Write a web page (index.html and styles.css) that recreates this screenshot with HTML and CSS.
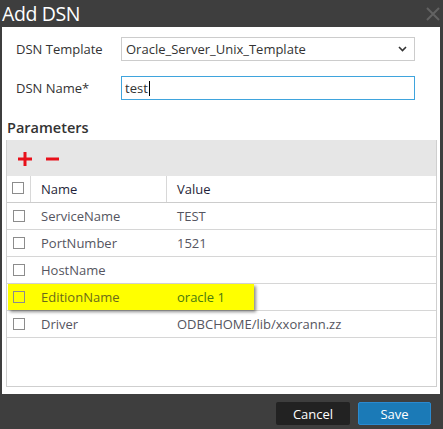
FILE: index.html
```html
<!DOCTYPE html>
<html>
<head>
<meta charset="utf-8">
<link rel="stylesheet" href="styles.css">
</head>
<body>
<div class="dialog">
  <div class="titlebar">
    <span class="title">Add DSN</span>
    <svg class="close" width="14" height="14" viewBox="0 0 14 14"><path d="M1 1L13 13M13 1L1 13" stroke="#626262" stroke-width="2"/></svg>
  </div>
  <div class="content">
    <div class="form-row">
      <label class="label">DSN Template</label>
      <div class="select">
        <span>Oracle_Server_Unix_Template</span>
        <svg class="chev" width="9" height="6" viewBox="0 0 9 6"><path d="M1 1L4.5 4.5L8 1" fill="none" stroke="#333" stroke-width="1.6"/></svg>
      </div>
    </div>
    <div class="form-row">
      <label class="label">DSN Name*</label>
      <div class="input"><span>test</span><span class="caret"></span></div>
    </div>
    <div class="section-title">Parameters</div>
    <div class="table">
      <div class="toolbar">
        <svg class="icon" width="14" height="14" viewBox="0 0 14 14"><path d="M0 7H14M7 0V14" stroke="#e8101a" stroke-width="3"/></svg>
        <svg class="icon" width="13" height="14" viewBox="0 0 13 14"><path d="M0 7H13" stroke="#e8101a" stroke-width="3"/></svg>
      </div>
      <div class="row head">
        <div class="c-check"><span class="box"></span></div>
        <div class="c-name">Name</div>
        <div class="c-value">Value</div>
      </div>
      <div class="row">
        <div class="c-check"><span class="box"></span></div>
        <div class="c-name">ServiceName</div>
        <div class="c-value">TEST</div>
      </div>
      <div class="row">
        <div class="c-check"><span class="box"></span></div>
        <div class="c-name">PortNumber</div>
        <div class="c-value">1521</div>
      </div>
      <div class="row">
        <div class="c-check"><span class="box"></span></div>
        <div class="c-name">HostName</div>
        <div class="c-value"></div>
      </div>
      <div class="row marked">
        <div class="highlight"></div>
        <div class="c-check"><span class="box"></span></div>
        <div class="c-name">EditionName</div>
        <div class="c-value">oracle 1</div>
      </div>
      <div class="row">
        <div class="c-check"><span class="box"></span></div>
        <div class="c-name">Driver</div>
        <div class="c-value">ODBCHOME/lib/xxorann.zz</div>
      </div>
    </div>
  </div>
  <div class="footer">
    <button class="btn cancel">Cancel</button>
    <button class="btn save">Save</button>
  </div>
</div>
</body>
</html>
```
FILE: styles.css
```css
* { box-sizing: border-box; }
html, body { margin: 0; padding: 0; }
body {
  width: 443px;
  height: 429px;
  background: #3e3e3e;
  font-family: "Open Sans", "Noto Sans", sans-serif;
  overflow: hidden;
}
.dialog {
  display: flex;
  flex-direction: column;
  height: 429px;
}
.titlebar {
  height: 27px;
  display: flex;
  align-items: center;
  justify-content: space-between;
  padding: 0 3px 0 2px;
}
.title {
  color: #ffffff;
  font-size: 19.5px;
  line-height: 27px;
  letter-spacing: -0.4px;
}
.content {
  background: #ffffff;
  margin: 0 3px 0 2px;
  height: 367px;
  padding-top: 10px;
}
.form-row {
  display: flex;
  align-items: center;
  margin-bottom: 15px;
  padding-left: 14px;
}
.label {
  width: 105px;
  color: #333333;
  font-size: 13px;
}
.select {
  width: 294px;
  height: 24px;
  border: 1px solid #cccccc;
  display: flex;
  align-items: center;
  justify-content: space-between;
  padding: 0 7px 0 4px;
  font-size: 13px;
  color: #333333;
}
.input {
  width: 294px;
  height: 24px;
  border: 1px solid #3fa4dd;
  display: flex;
  align-items: center;
  padding: 0 3px;
  font-size: 13px;
  color: #333333;
}
.caret {
  display: inline-block;
  width: 1px;
  height: 15px;
  background: #000;
  margin-left: 1px;
}
.section-title {
  font-size: 14.5px;
  font-weight: 600;
  color: #333333;
  padding: 3px 0 0 5px;
  line-height: 20px;
}
.table {
  margin: 2px 3px 0 4px;
  height: 247px;
  border: 1px solid #cfcfcf;
  border-top: none;
}
.toolbar {
  height: 36px;
  background: #e6e6e6;
  display: flex;
  align-items: center;
  gap: 14px;
  padding-left: 11px;
  padding-top: 1px;
}
.row {
  display: flex;
  height: 27px;
  border-bottom: 1px solid #d6d6d6;
  font-size: 13px;
  color: #555560;
  position: relative;
}
.row > div { display: flex; align-items: center; position: relative; }
.c-check { width: 24px; padding-left: 6px; }
.c-name { width: 136px; padding-left: 10px; }
.c-value { flex: 1; padding-left: 10px; }
.head { color: #1f1f3a; border-bottom: 1px solid #cccccc; }
.head .c-check, .head .c-name { border-right: 1px solid #d8d8d8; }
.head .c-check { padding-left: 5px; }
.box {
  display: inline-block;
  width: 12px;
  height: 12px;
  border: 1px solid #8c8c8c;
  background: transparent;
}
.head .box { margin-top: -3px; }
.highlight {
  position: absolute !important;
  left: 1px;
  top: 0;
  width: 246px;
  height: 26px;
  background: #ffff00;
  box-shadow: 2px 2px 3px rgba(0,0,0,0.45);
}
.marked { color: #6b6b1a; }
.marked .c-value { color: #4a7a10; }
.footer {
  flex: 1;
  display: flex;
  justify-content: flex-end;
  align-items: flex-start;
  padding: 8px 12px 0 0;
  gap: 8px;
}
.btn {
  height: 23px;
  border: none;
  border-radius: 2px;
  color: #ffffff;
  font-family: "Open Sans", "Noto Sans", sans-serif;
  font-size: 13px;
  padding: 0;
}
.cancel { width: 74px; background: #222222; }
.save { width: 73px; background: #1b7ab7; border: 1px solid #2a8ad0; }
```
